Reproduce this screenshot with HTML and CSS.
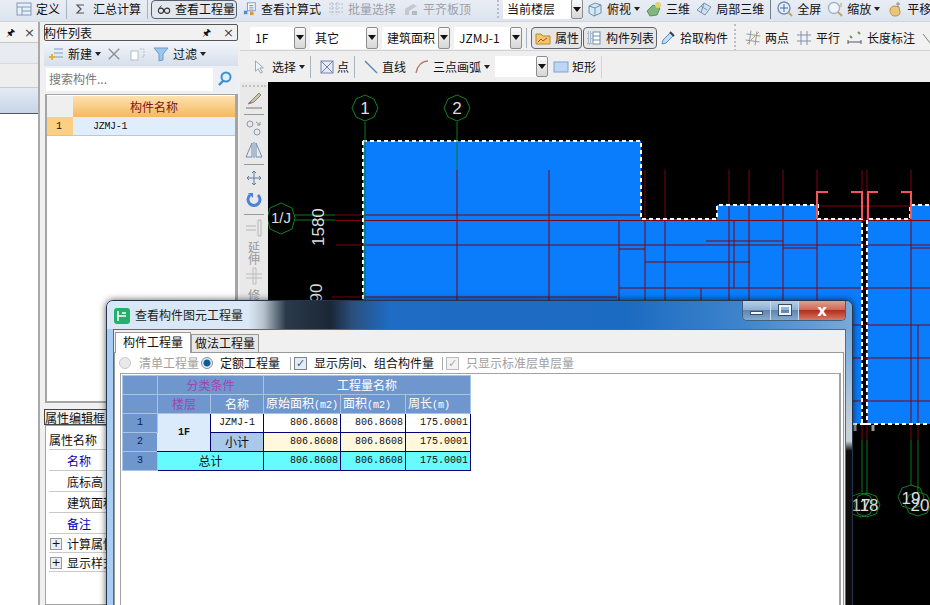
FILE: index.html
```html
<!DOCTYPE html>
<html lang="zh">
<head>
<meta charset="utf-8">
<title>查看构件图元工程量</title>
<link rel="stylesheet" href="styles.css">
</head>
<body>
<div class="app">
  <header class="topbar">
    <div class="tool"><svg class="ic" viewBox="0 0 16 16"><rect x="1" y="2" width="14" height="12" fill="#e8eff8" stroke="#7f9bbd"/><path d="M1 6h14M6 6v8M6 10h9" stroke="#7f9bbd"/></svg><span>定义</span></div>
    <i class="vsep"></i>
    <div class="tool"><svg class="ic" viewBox="0 0 16 16"><path d="M11 4H4l4 4-4 4h7" fill="none" stroke="#555" stroke-width="1.2"/></svg><span>汇总计算</span></div>
    <i class="vsep"></i>
    <div class="tool t-on"><svg class="ic ic-s" viewBox="0 0 16 16"><circle cx="4.5" cy="10" r="3" fill="none" stroke="#333" stroke-width="1.2"/><circle cx="11.5" cy="10" r="3" fill="none" stroke="#333" stroke-width="1.2"/><path d="M7 9h2M2 8l3-4" stroke="#333" fill="none"/></svg><span>查看工程量</span></div>
    <div class="tool"><svg class="ic ic-s" viewBox="0 0 16 16"><rect x="5" y="1" width="9" height="9" fill="#fff" stroke="#6f8fb5"/><path d="M7 4h5M7 6h5M7 8h5" stroke="#6f8fb5"/><rect x="1" y="10" width="4" height="4" fill="#4c8fd6"/><rect x="8" y="11" width="4" height="4" fill="#e0943a"/></svg><span>查看计算式</span></div>
    <div class="tool t-off"><svg class="ic" viewBox="0 0 16 16"><path d="M1 3h14M1 7h14M1 11h14M4 1v13M9 1v13" stroke="#b6bfca" fill="none" stroke-dasharray="2 1"/></svg><span>批量选择</span></div>
    <div class="tool t-off"><svg class="ic" viewBox="0 0 16 16"><path d="M2 14V8l8-5 4 2-8 5v4z" fill="#c3c9d1"/><rect x="9" y="10" width="5" height="4" fill="#b3bac3"/></svg><span>平齐板顶</span></div>
    <i class="grip grip-top"></i>
    <div class="combo combo-floor"><span>当前楼层</span><b class="cbtn"></b></div>
    <div class="tool t-view"><svg class="ic" viewBox="0 0 16 16"><path d="M2 5l6-3 6 2v8l-7 3-5-3z" fill="#d5e7f6" stroke="#6f90ad"/><path d="M2 5l6 2 6-3M8 7v8" stroke="#6f90ad" fill="none"/></svg><span>俯视</span><i class="arr"></i></div>
    <div class="tool"><svg class="ic" viewBox="0 0 16 16"><path d="M1 10l6-6 7 3-3 7-7 1z" fill="#7fb77f" stroke="#5d8f5d"/><circle cx="12" cy="4" r="3" fill="#e8d06a"/></svg><span>三维</span></div>
    <div class="tool"><svg class="ic" viewBox="0 0 16 16"><path d="M1 9l7-7 7 4-6 8z" fill="#cfe0f0" stroke="#7c95ad"/><path d="M5 5l6 4M8 2l-3 10" stroke="#7c95ad"/></svg><span>局部三维</span></div>
    <i class="vsep vsep-dark"></i>
    <div class="tool"><svg class="ic" viewBox="0 0 16 16"><circle cx="7" cy="7" r="6" fill="#e6eef8" stroke="#6f8fb5" stroke-width="1.4"/><path d="M7 3v8M3 7h8" stroke="#3f6fa8"/><path d="M11 11l4 4" stroke="#c9a36a" stroke-width="2"/></svg><span>全屏</span></div>
    <div class="tool"><svg class="ic" viewBox="0 0 16 16"><circle cx="7" cy="7" r="5.5" fill="#f0f5fb" stroke="#9fb4cb" stroke-width="1.4"/><path d="M11 11l4 4" stroke="#c9a36a" stroke-width="2"/><path d="M14 2v4" stroke="#d59a3a"/></svg><span>缩放</span><i class="arr"></i></div>
    <div class="tool t-pan"><svg class="ic" viewBox="0 0 16 16"><path d="M3 9c0-3 3-4 5-4l4 1 1 5c0 3-2 4-5 4s-5-2-5-6z" fill="#e8c77d" stroke="#b8934a"/><path d="M11 1v5M9 3h4" stroke="#888"/></svg><span>平移</span></div>
  </header>

  <div class="main">
    <aside class="stub">
      <div class="stub-head"><span class="pin">&#x1F588;</span><span class="closex">×</span></div>
      <div class="stub-a"></div>
      <div class="stub-b"></div>
      <div class="stub-c"></div>
      <div class="stub-d"></div>
    </aside>

    <section class="panels">
      <div class="phead"><span>构件列表</span><span class="pin">&#x1F588;</span><span class="closex">×</span></div>
      <div class="ptools">
        <div class="tool"><svg class="ic" viewBox="0 0 16 16"><path d="M6 3h9M6 7h9M6 11h9" stroke="#7f9bbd"/><path d="M4 8v6M1 11h6" stroke="#e3b23c" stroke-width="2"/></svg><span>新建</span><i class="arr"></i></div>
        <svg class="ic ic-x" viewBox="0 0 16 16"><path d="M2 2l12 12M14 2L2 14" stroke="#8a8f96" stroke-width="1.6"/></svg>
        <svg class="ic ic-copy" viewBox="0 0 16 16"><rect x="1" y="5" width="7" height="9" fill="#fff" stroke="#b5bcc6"/><path d="M10 3h4v8h-3" fill="none" stroke="#b5bcc6" stroke-dasharray="2 1"/></svg>
        <div class="tool"><svg class="ic" viewBox="0 0 16 16"><path d="M1 2h14L10 8v6l-4 1V8z" fill="#9cc6ea" stroke="#6d9cc6"/></svg><span>过滤</span><i class="arr"></i></div>
      </div>
      <div class="psearch"><span class="sinput">搜索构件...</span><svg class="ic" viewBox="0 0 16 16"><circle cx="9" cy="6" r="4.5" fill="#dff0fb" stroke="#3f8fd0" stroke-width="2"/><path d="M6 10l-4 4" stroke="#3f8fd0" stroke-width="2.4"/></svg></div>
      <div class="listframe">
        <div class="lrow lhead"><span class="lnum"></span><span class="lname">构件名称</span></div>
        <div class="lrow lbody"><span class="lnum">1</span><span class="lval">JZMJ-1</span></div>
      </div>
      <div class="attr-title">属性编辑框</div>
      <div class="attr">
        <div class="arow a-h">属性名称</div>
        <div class="arow a-blue">名称</div>
        <div class="arow">底标高</div>
        <div class="arow">建筑面积</div>
        <div class="arow a-blue">备注</div>
        <div class="arow a-exp"><i class="plus">+</i>计算属性</div>
        <div class="arow a-exp"><i class="plus">+</i>显示样式</div>
      </div>
    </section>

    <section class="work">
      <div class="row2">
        <div class="combo combo-s"><span>1F</span><b class="cbtn"></b></div>
        <div class="combo"><span>其它</span><b class="cbtn"></b></div>
        <div class="combo"><span>建筑面积</span><b class="cbtn"></b></div>
        <div class="combo"><span>JZMJ-1</span><b class="cbtn"></b></div>
        <i class="vsep"></i>
        <div class="tool t-tog t-attr"><svg class="ic" viewBox="0 0 16 16"><path d="M1 4h5l2 2h7v8H1z" fill="#f3c766" stroke="#b98a33"/><path d="M3 12l3-3 2 2 4-3" stroke="#c24a2a" fill="none"/></svg><span>属性</span></div>
        <div class="tool t-tog t-list"><svg class="ic" viewBox="0 0 16 16"><path d="M2 2h3v3H2zM2 7h3v3H2zM2 12h3v2H2z" fill="none" stroke="#6f8fb5" stroke-dasharray="1 1"/><rect x="7" y="2" width="7" height="12" fill="#fff" stroke="#6f8fb5"/><path d="M7 6h7M7 10h7" stroke="#6f8fb5"/></svg><span>构件列表</span></div>
        <div class="tool t-pick"><svg class="ic" viewBox="0 0 16 16"><path d="M2 14l1-4 7-7 3 3-7 7z" fill="#c3def5" stroke="#4f8fc8"/><path d="M10 2l4 4" stroke="#345" stroke-width="2"/></svg><span>拾取构件</span></div>
        <i class="grip grip-mid"></i>
        <div class="tool"><svg class="ic" viewBox="0 0 16 16"><path d="M1 5h14M1 11h14M5 1v14M11 1v14" stroke="#8f9aa8" fill="none" transform="rotate(8 8 8)"/><path d="M2 14L14 2" stroke="#c2a17a"/></svg><span>两点</span></div>
        <div class="tool t-m3"><svg class="ic" viewBox="0 0 16 16"><path d="M1 5h14M1 11h14M5 1v14M11 1v14" stroke="#7f92ad" fill="none"/></svg><span>平行</span></div>
        <div class="tool t-m3"><svg class="ic" viewBox="0 0 16 16"><path d="M1 10v4M14 10v4M1 12h13" stroke="#556" fill="none"/><path d="M3 6l2 2M11 2l2 2" stroke="#6b9a5a" stroke-width="2"/></svg><span>长度标注</span></div>
        <div class="tool t-m3"><svg class="ic" viewBox="0 0 16 16"><path d="M1 4l7 9 7-9" stroke="#7c8a7c" fill="none"/></svg></div>
      </div>
      <div class="row3">
        <div class="tool"><svg class="ic ic-s" viewBox="0 0 16 16"><path d="M4 1v12l3-3 3 5 2-1-3-5h4z" fill="#f4f6f9" stroke="#8fa0b5"/></svg><span class="ml2">选择</span><i class="arr"></i></div>
        <i class="vsep"></i>
        <div class="tool t-pt"><svg class="ic ic-s" viewBox="0 0 14 14"><rect x="1" y="1" width="12" height="12" fill="#e5ebf6" stroke="#7683ad"/><path d="M1 1l12 12M13 1L1 13" stroke="#7683ad"/></svg><span>点</span></div>
        <i class="vsep"></i>
        <div class="tool t-arc"><svg class="ic" viewBox="0 0 16 16"><path d="M2 2l12 12" stroke="#5d86b8" stroke-width="1.4"/></svg><span>直线</span></div>
        <div class="tool t-arc"><svg class="ic" viewBox="0 0 16 16"><path d="M2 14C3 7 8 2 14 2" fill="none" stroke="#b9786f" stroke-width="1.4"/></svg><span>三点画弧</span><i class="arr"></i></div>
        <div class="combo combo-e"><span></span><b class="cbtn"></b></div>
        <div class="tool"><svg class="ic" viewBox="0 0 16 16"><rect x="1" y="3" width="14" height="10" fill="#bcd6f4" stroke="#7fa3d6"/></svg><span>矩形</span></div>
        <i class="vsep vsep-light"></i>
      </div>
      <div class="stage">
        <nav class="vtools">
          <i class="hgrip"></i>
          <svg class="vic" viewBox="0 0 18 18"><path d="M3 13l4-4 7-7 2 2-7 7z" fill="#c9c3a6" stroke="#8b8a70"/><path d="M4 13l3-1-2-2z" fill="#b35bb0"/><path d="M1 17h16" stroke="#777"/></svg>
          <i class="hsep"></i>
          <svg class="vic" viewBox="0 0 18 18"><circle cx="5" cy="5" r="3" fill="none" stroke="#8b98a8"/><circle cx="12" cy="13" r="3" fill="none" stroke="#8b98a8"/><path d="M11 3l4 3M15 3v3h-3" stroke="#8b98a8" fill="none"/></svg>
          <svg class="vic" viewBox="0 0 18 18"><path d="M7 2v14H1zM11 2v14h6zM9 1v16" fill="none" stroke="#6f8fb5"/></svg>
          <i class="hsep"></i>
          <svg class="vic" viewBox="0 0 18 18"><path d="M9 2v14M2 9h14M9 2L7 4M9 2l2 2M9 16l-2-2M9 16l2-2M2 9l2-2M2 9l2 2M16 9l-2-2M16 9l-2 2" stroke="#5f7f9f" fill="none"/></svg>
          <svg class="vic" viewBox="0 0 18 18"><path d="M5 4a6 6 0 1 0 8 0" fill="none" stroke="#4d82d8" stroke-width="3"/><path d="M3 2h5v5" fill="#4d82d8"/></svg>
          <i class="hsep"></i>
          <svg class="vic" viewBox="0 0 18 18"><path d="M13 1h3v16h-3zM1 7h10M1 11h10" stroke="#b5b5b5" fill="none"/></svg>
          <span class="vtxt">延</span>
          <span class="vtxt">伸</span>
          <svg class="vic vic-low" viewBox="0 0 18 18"><path d="M8 1h3v16H8zM1 7h16M1 11h16" stroke="#bdbdbd" fill="none"/></svg>
          <span class="vtxt">修</span>
        </nav>
        <svg class="canvas" viewBox="268 82 662 523" preserveAspectRatio="xMinYMin">
          <path class="slab" d="M363 141H641V219H717V205H818V219H862V424H867V219H910V205H930V424H363Z"/>
          <path class="g-red" d="M335 215H641M335 220.5H930M336 245H930M332 297H617M457 170V300M549 170V300M619 221V300M645 170V300M665 170V300M729 170V300M749 170V300M783 170V300M817 170V300M862 170V424M867 170V424M911 170V424M918 325V440M619 249H645M645 262H750M706 241H783M734 221V288M783 248H817M911 248H930M619 288H930M701 288V300M818 206H910M853 325H930M853 358H930M853 401H930M862 424V440M867 424V440M911 424V440"/>
          <path class="dash" d="M363 141H641V219H717V205H818V219H862V424H867V219H910V205H930M363 141V300M853 424H930"/>
          <path class="bracket" d="M828 192H817V219M851 192H862V219M878 192H868V219M901 192H911V219"/>
          <path class="tick" d="M855 425V431M873 425V431"/>
          <g class="g-green">
            <path d="M365 122V300M457 122V170M294 215H335M294 220H335M862 440V492M867 440V495M911 440V485M918 440V492"/>
            <path class="oct" d="M365 95l9 4 4 9-4 9-9 4-9-4-4-9 4-9z"/>
            <path class="oct" d="M457 95l9 4 4 9-4 9-9 4-9-4-4-9 4-9z"/>
            <path class="oct" d="M281 203l11 5 3 10-3 11-11 5-11-5-3-11 3-10z"/>
            <path class="oct" d="M861 493l9 3 4 9-4 9-9 3-9-3-4-9 4-9z"/>
            <path class="oct" d="M867 493l9 3 4 9-4 9-9 3-9-3-4-9 4-9z"/>
            <path class="oct" d="M911 485l9 3 4 9-4 9-9 3-9-3-4-9 4-9z"/>
            <path class="oct" d="M918 492l9 3 4 9-4 9-9 3-9-3-4-9 4-9z"/>
          </g>
          <text class="label" x="365" y="114" text-anchor="middle">1</text>
          <text class="label" x="457" y="114" text-anchor="middle">2</text>
          <text class="label label-n" x="281" y="223" text-anchor="middle">1/J</text>
          <text class="label" x="861" y="511" text-anchor="middle">17</text>
          <text class="label" x="869" y="511" text-anchor="middle">18</text>
          <text class="label" x="911" y="504" text-anchor="middle">19</text>
          <text class="label" x="920" y="511" text-anchor="middle">20</text>
          <text class="label" transform="translate(324 246) rotate(-90)">1580</text>
          <text class="label" transform="translate(322 312) rotate(-90)">390</text>
        </svg>
      </div>
    </section>
  </div>

  <div class="dialog">
    <div class="titlebar">
      <svg class="appicon" viewBox="0 0 16 16"><rect x="0" y="0" width="16" height="16" rx="3" fill="#23b06a"/><path d="M4 3v10M4 8h8M8 5h4" stroke="#fff" stroke-width="1.6" fill="none"/></svg>
      <span class="dtitle">查看构件图元工程量</span>
      <div class="capbtns">
        <div class="cb cb-min"><i></i></div>
        <div class="cb cb-max"><i></i></div>
        <div class="cb cb-close">x</div>
      </div>
    </div>
    <div class="client">
      <div class="tabs">
        <div class="tab tab-on">构件工程量</div>
        <div class="tab">做法工程量</div>
      </div>
      <div class="tabbody">
        <div class="opts">
          <i class="radio"></i><span class="dim o-1">清单工程量</span>
          <i class="radio radio-on"></i><span class="o-2">定额工程量</span>
          <i class="osep"></i>
          <i class="check">✓</i><span class="o-2">显示房间、组合构件量</span>
          <i class="osep osep-b"></i>
          <i class="check check-off">✓</i><span class="dim o-2">只显示标准层单层量</span>
        </div>
        <div class="gridframe">
          <table class="qty">
            <colgroup><col class="c-a"><col class="c-b"><col class="c-b"><col class="c-c"><col class="c-d"><col class="c-d"></colgroup>
            <tr class="hd"><th></th><th colspan="2" class="pur">分类条件</th><th colspan="3">工程量名称</th></tr>
            <tr class="hd"><th></th><th class="pur">楼层</th><th>名称</th><th class="unit">原始面积<small>(m2)</small></th><th class="unit">面积<small>(m2)</small></th><th class="unit">周长<small>(m)</small></th></tr>
            <tr><th class="no">1</th><td rowspan="2" class="floor mono">1F</td><td class="cname mono">JZMJ-1</td><td class="num">806.8608</td><td class="num">806.8608</td><td class="num">175.0001</td></tr>
            <tr><th class="no">2</th><td class="sub">小计</td><td class="num cream">806.8608</td><td class="num cream">806.8608</td><td class="num cream">175.0001</td></tr>
            <tr><th class="no">3</th><td colspan="2" class="total">总计</td><td class="num cyan">806.8608</td><td class="num cyan">806.8608</td><td class="num cyan">175.0001</td></tr>
          </table>
        </div>
      </div>
    </div>
  </div>
</div>
</body>
</html>
```
FILE: styles.css
```css
* { box-sizing: border-box; }
html, body { margin: 0; height: 100%; }
body { width: 930px; height: 605px; overflow: hidden; background: #f0f0f0; color: #111;
  font: 12px/16px "Noto Sans CJK SC", "Liberation Sans", sans-serif; }
i { font-style: normal; }
.app { position: relative; width: 930px; height: 605px; overflow: hidden; display: flex; flex-direction: column; }

/* generic toolbar parts */
.tool { display: flex; align-items: center; gap: 4px; flex: none; white-space: nowrap; }
.ic { width: 16px; height: 16px; flex: none; display: block; }
.ic-s { width: 14px; height: 14px; }
.arr { width: 0; height: 0; margin-left: -1px; border: 3px solid transparent; border-top: 4px solid #222; border-bottom: 0; }
.vsep { width: 1px; height: 20px; background: #a9b2bd; flex: none; }
.vsep-dark { background: #6f7f92; }
.vsep-light { background: #d4d4d4; }
.grip { flex: none; width: 2px; border-left: 2px dotted #b9bfc8; }

.topbar { height: 22px; flex: none; display: flex; align-items: center; gap: 6px; padding: 0 0 3px 16px;
  background: linear-gradient(#e9edf5, #dde4ee); border-bottom: 1px solid #cfd6df; overflow: hidden; }
.t-on { height: 19px; margin-left: -3px; padding: 0 1px 0 5px; border: 1px solid #55606e; border-radius: 4px; background: #e3e8ef; }
.t-off { color: #9aa1aa; margin-left: 1px; }
.grip-top { height: 18px; margin-left: 20px; }
.combo { display: flex; flex: none; width: 68px; height: 22px; background: #fff; padding-left: 5px; align-items: center; justify-content: space-between; }
.combo span { white-space: nowrap; }
.combo-s { width: 56px; }
.combo-floor { width: 80px; margin-left: -2px; height: 20px; padding-left: 4px; }
.combo-e { width: 53px; height: 21px; }
.cbtn { width: 12px; height: 100%; flex: none; display: flex; align-items: center; justify-content: center; background: linear-gradient(#fafafa, #d6d6d6); border: 1px solid #8d8d8d; border-radius: 2px; }
.cbtn::after { content: ""; border: 4px solid transparent; border-top: 5px solid #111; border-bottom: 0; }
.t-view { margin-left: -2px; }
.t-pan { margin-left: 1px; }

.main { flex: 1; display: flex; min-height: 0; }

/* cut-off left column */
.stub { width: 40px; flex: none; display: flex; flex-direction: column; background: #fff; border-right: 2px solid #a9a9a9; }
.stub-head { height: 20px; display: flex; justify-content: flex-end; align-items: center; gap: 9px; padding: 2px 3px 0 0; background: #f3f3f3; }
.stub-a { height: 21px; background: #e8ebef; border-top: 1px solid #c8c8c8; }
.stub-b { height: 24px; background: #eeeeee; border-top: 1px solid #d8d8d8; }
.stub-c { height: 27px; background: linear-gradient(#e4ebf5, #c6d5e8); border-top: 1px solid #ccc; border-bottom: 1px solid #555; }
.stub-d { flex: 1; background: #fff; }
.pin { font: 10px/12px "DejaVu Sans", sans-serif; color: #111; }
.closex { font: 13px/12px "DejaVu Sans", sans-serif; color: #444; }

/* component list + attributes */
.panels { width: 194px; flex: none; margin-left: 4px; display: flex; flex-direction: column; }
.phead { height: 17px; margin-top: 2px; display: flex; align-items: center; gap: 12px; background: #f1f1f1; border: 1px solid #555; border-radius: 2px; padding-right: 3px; }
.phead span:first-child { flex: 1; white-space: nowrap; margin-left: -1px; }
.ptools { height: 25px; display: flex; align-items: center; gap: 5px; padding: 0 0 0 4px; background: linear-gradient(#f3f5fa, #d6dfeb); }
.ic-x { width: 14px; height: 14px; margin-left: 1px; }
.ic-copy { margin: 0 2px 0 4px; }
.psearch { height: 26px; display: flex; align-items: center; background: #eceff4; padding: 0 5px 0 2px; justify-content: space-between; }
.sinput { width: 167px; height: 23px; padding: 3px; background: #fff; color: #777; }
.listframe { height: 309px; margin: 2px 0 0 1px; background: #fff; border: solid #a5a5a5; border-width: 1px 3px 2px 2px; padding-top: 1px; }
.lrow { display: flex; }
.lnum { width: 26px; flex: none; background: #efefef; }
.lhead { height: 21px; }
.lname { flex: 1; text-align: center; line-height: 22px; color: #7d1616; background: linear-gradient(#fde2b0, #f4b95f); }
.lbody { height: 19px; border-bottom: 1px solid #b7c8da; }
.lbody .lnum { background: #fdcf80; font: 10px/19px "Liberation Mono", monospace; padding-left: 9px; }
.lval { flex: 1; background: #dfeefa; font: 10px/19px "Liberation Mono", monospace; letter-spacing: -.3px; padding-left: 20px; }
.attr-title { margin-top: 6px; height: 16px; background: #f1f1f1; border: 1px solid #444; border-right: 0; white-space: nowrap; overflow: hidden; }
.attr { flex: 1; margin-left: 1px; border: 1px solid #a5a5a5; background: #fff; padding: 3px 0 0 3px; }
.arow { height: 21px; line-height: 22px; padding-left: 18px; border-bottom: 1px solid #c9c9c9; white-space: nowrap; }
.a-h { padding-left: 0; }
.a-blue { color: #0000b4; }
.a-exp { height: 19px; padding: 2px 0 0 1px; line-height: 16px; display: flex; align-items: center; gap: 5px; }
.plus { width: 12px; height: 12px; flex: none; border: 1px solid #999; background: #eee; font: 11px/10px "DejaVu Sans", sans-serif; text-align: center; }

/* right side */
.work { flex: 1; min-width: 0; display: flex; flex-direction: column; margin-left: 2px; }
.row2 { height: 29px; flex: none; display: flex; align-items: center; gap: 4px; padding: 3px 0 0 10px; background: #f1f1f1; border-bottom: 1px solid #d2d2d2; overflow: hidden; }
.t-tog { height: 22px; border: 1px solid #5f666f; border-radius: 4px; background: #e6e6e6; padding: 0 2px 0 2px; }
.t-attr { width: 51px; padding-left: 3px; }
.t-list { width: 74px; margin-left: -3px; }
.t-pick { margin-left: -1px; }
.grip-mid { height: 27px; margin: 0 5px 0 2px; }
.t-m3 { margin-left: 3px; }
.row3 { height: 31px; flex: none; display: flex; align-items: center; gap: 5px; padding: 0 0 0 12px; background: #efefef; overflow: hidden; }
.row3 .vsep { height: 22px; }
.ml2 { margin-left: 3px; }
.row3 .arr { margin-left: 0; }
.t-pt { margin-left: 4px; }
.t-arc { margin-left: 3px; }
.row3 .tool { gap: 3px; }

.stage { flex: 1; min-height: 0; display: flex; }
.vtools { width: 28px; flex: none; display: flex; flex-direction: column; align-items: center; background: #e9e9e9; padding-top: 3px; gap: 4px; }
.vic { width: 18px; height: 18px; flex: none; }
.vic-low { margin-top: 2px; }
.hgrip { width: 24px; height: 2px; border-top: 2px dotted #c4c4c4; flex: none; }
.hsep { width: 20px; height: 1px; margin-top: 1px; background: #9a9a9a; flex: none; }
.vtxt { line-height: 12px; margin-bottom: -4px; color: #999; text-align: center; }
.canvas { flex: none; width: 662px; height: 523px; display: block; background: #000; }
.slab { fill: #0a7dfc; }
.g-green { fill: none; stroke: #0c7a1c; stroke-width: 1; }
.oct { stroke: #12801f; }
.g-red { fill: none; stroke: #7c0410; stroke-width: 1; }
.dash { fill: none; stroke: #fff; stroke-width: 2; stroke-dasharray: 4 3; }
.bracket { fill: none; stroke: #f4545a; stroke-width: 2; }
.tick { fill: none; stroke: #999; stroke-width: 3; }
.label { fill: #ddd; font: 17px "Liberation Sans", sans-serif; }
.label-n { font-size: 15px; }

/* floating dialog */
.dialog { position: absolute; left: 106px; top: 300px; width: 747px; height: 330px; padding: 0 6px 0 6px;
  border: 1px solid #24344a; border-radius: 7px 7px 0 0;
  background: linear-gradient(90deg, #a9cdf3 0 50%, transparent 50%), linear-gradient(#6c9fd6 0, #8cb5de 60px, #c8d0d8 125px, #c8d0d8 140px, #0c0c0c 150px);
  box-shadow: 0 0 7px rgba(0,0,0,.65); }
.titlebar { height: 28px; margin: 0 -6px 0 -6px; display: flex; align-items: center; padding: 0 6px 0 7px; border-radius: 6px 6px 0 0;
  background: linear-gradient(90deg, #d7e7f6 0, #dbe9f7 19%, #b6c3cf 21%, #2a3a4a 24%, #1a2736 30%, #2a507d 33%, #1e6cc4 38%, #1c6bc2 70%, #3e84cc 85%, #7aa8d8 100%); }
.appicon { width: 16px; height: 16px; flex: none; margin-top: 1px; }
.dtitle { margin-left: 5px; color: #1c1c1c; white-space: nowrap; }
.capbtns { margin-left: auto; align-self: flex-start; display: flex; height: 20px; border: 1px solid #40607e; border-top: 0; border-radius: 0 0 5px 5px; overflow: hidden; }
.cb { display: flex; align-items: center; justify-content: center; height: 100%; border-right: 1px solid #c9dcef; }
.cb-min, .cb-max { width: 28px; background: linear-gradient(#b5cfe9 0, #8fb1d4 45%, #5e86ae 50%, #86a9cf 100%); }
.cb-close { width: 46px; border-right: 0; color: #fff; font: bold 15px/16px "DejaVu Sans", sans-serif; background: linear-gradient(#e0a193 0, #cf6a57 45%, #b32e1c 50%, #d77a68 100%); }
.cb-min i { display: block; width: 13px; height: 4px; margin-top: 5px; background: #f4f8fc; border: 1px solid #34506e; }
.cb-max i { display: block; width: 12px; height: 10px; margin-bottom: 2px; border: 2px solid #eef4fa; outline: 1px solid #34506e; }
.client { height: 300px; background: #f0f0f0; border: 1px solid #3f6f9f; display: flex; flex-direction: column; }
.tabs { height: 22px; flex: none; display: flex; align-items: flex-end; padding-left: 1px; }
.tab { height: 18px; width: 68px; text-align: center; line-height: 16px; background: #e7e7e7; border: 1px solid #999; border-bottom: 0; }
.tab-on { height: 21px; width: 76px; background: #fff; line-height: 17px; position: relative; top: 1px; z-index: 1; }
.tabbody { flex: 1; width: 730px; background: #fff; border: 1px solid #999; display: flex; flex-direction: column; }
.opts { height: 20px; flex: none; display: flex; align-items: center; padding-left: 4px; white-space: nowrap; }
.dim { color: #a0a0a0; }
.radio { width: 12px; height: 12px; border-radius: 50%; flex: none; border: 1px solid #c8c8c8; background: #e9e9e9; }
.radio-on { margin-left: 2px; border-color: #7f8f9f; background: radial-gradient(circle, #0d5c9c 0 3px, #e8eef4 4px); }
.o-1 { margin-left: 8px; }
.o-2 { margin-left: 7px; }
.osep { width: 1px; height: 13px; flex: none; background: #aaa; margin: 0 3px 0 10px; }
.osep-b { margin-left: 8px; }
.check { width: 13px; height: 13px; flex: none; border: 1px solid #7a8594; background: #e6ecf4; color: #3f5f7f; font: 11px/11px "DejaVu Sans", sans-serif; text-align: center; }
.check-off { border-color: #bbb; background: #f2f2f2; color: #aaa; }
.gridframe { flex: 1; margin: 0 2px 0 5px; border: solid #a3a3a3; border-width: 1px 2px 0 1px; padding: 1px 0 0 1px; background: #fff; }
.qty { border-collapse: collapse; table-layout: fixed; width: 348px; background: #fff; }
.c-a { width: 35px; }
.c-b { width: 53px; }
.c-c { width: 77px; }
.c-d { width: 65px; }
.qty th, .qty td { padding: 0; height: 19px; font-weight: 400; line-height: 14px; text-align: center; vertical-align: middle; white-space: nowrap; overflow: hidden; }
.qty .hd th { background: #6f97cd; color: #fff; border: 1px solid #a9c3e3; }
.qty .hd th.pur { color: #a044b4; }
.qty .hd th.unit { text-align: left; padding-left: 2px; }
.unit small { font: 10px/14px "Liberation Mono", monospace; }
.qty td { border: 1px solid #000070; }
.qty .no { background: #6f97cd; color: #0a1f55; font: 10px/14px "Liberation Mono", monospace; border: 1px solid #a9c3e3; }
.qty .mono { font: 10px/14px "Liberation Mono", monospace; }
.qty .floor { background: #dcebfb; font-weight: bold; border-color: #dcebfb #000070 #000070 #dcebfb; }
.qty .cname { background: #fff; }
.qty .sub { background: #a9c8ec; }
.qty .total { background: #66fbff; }
.qty .num { font: 10px/14px "Liberation Mono", monospace; text-align: right; padding-right: 2px; }
.qty .cream { background: #fff8dc; }
.qty .cyan { background: #66fbff; }
```
